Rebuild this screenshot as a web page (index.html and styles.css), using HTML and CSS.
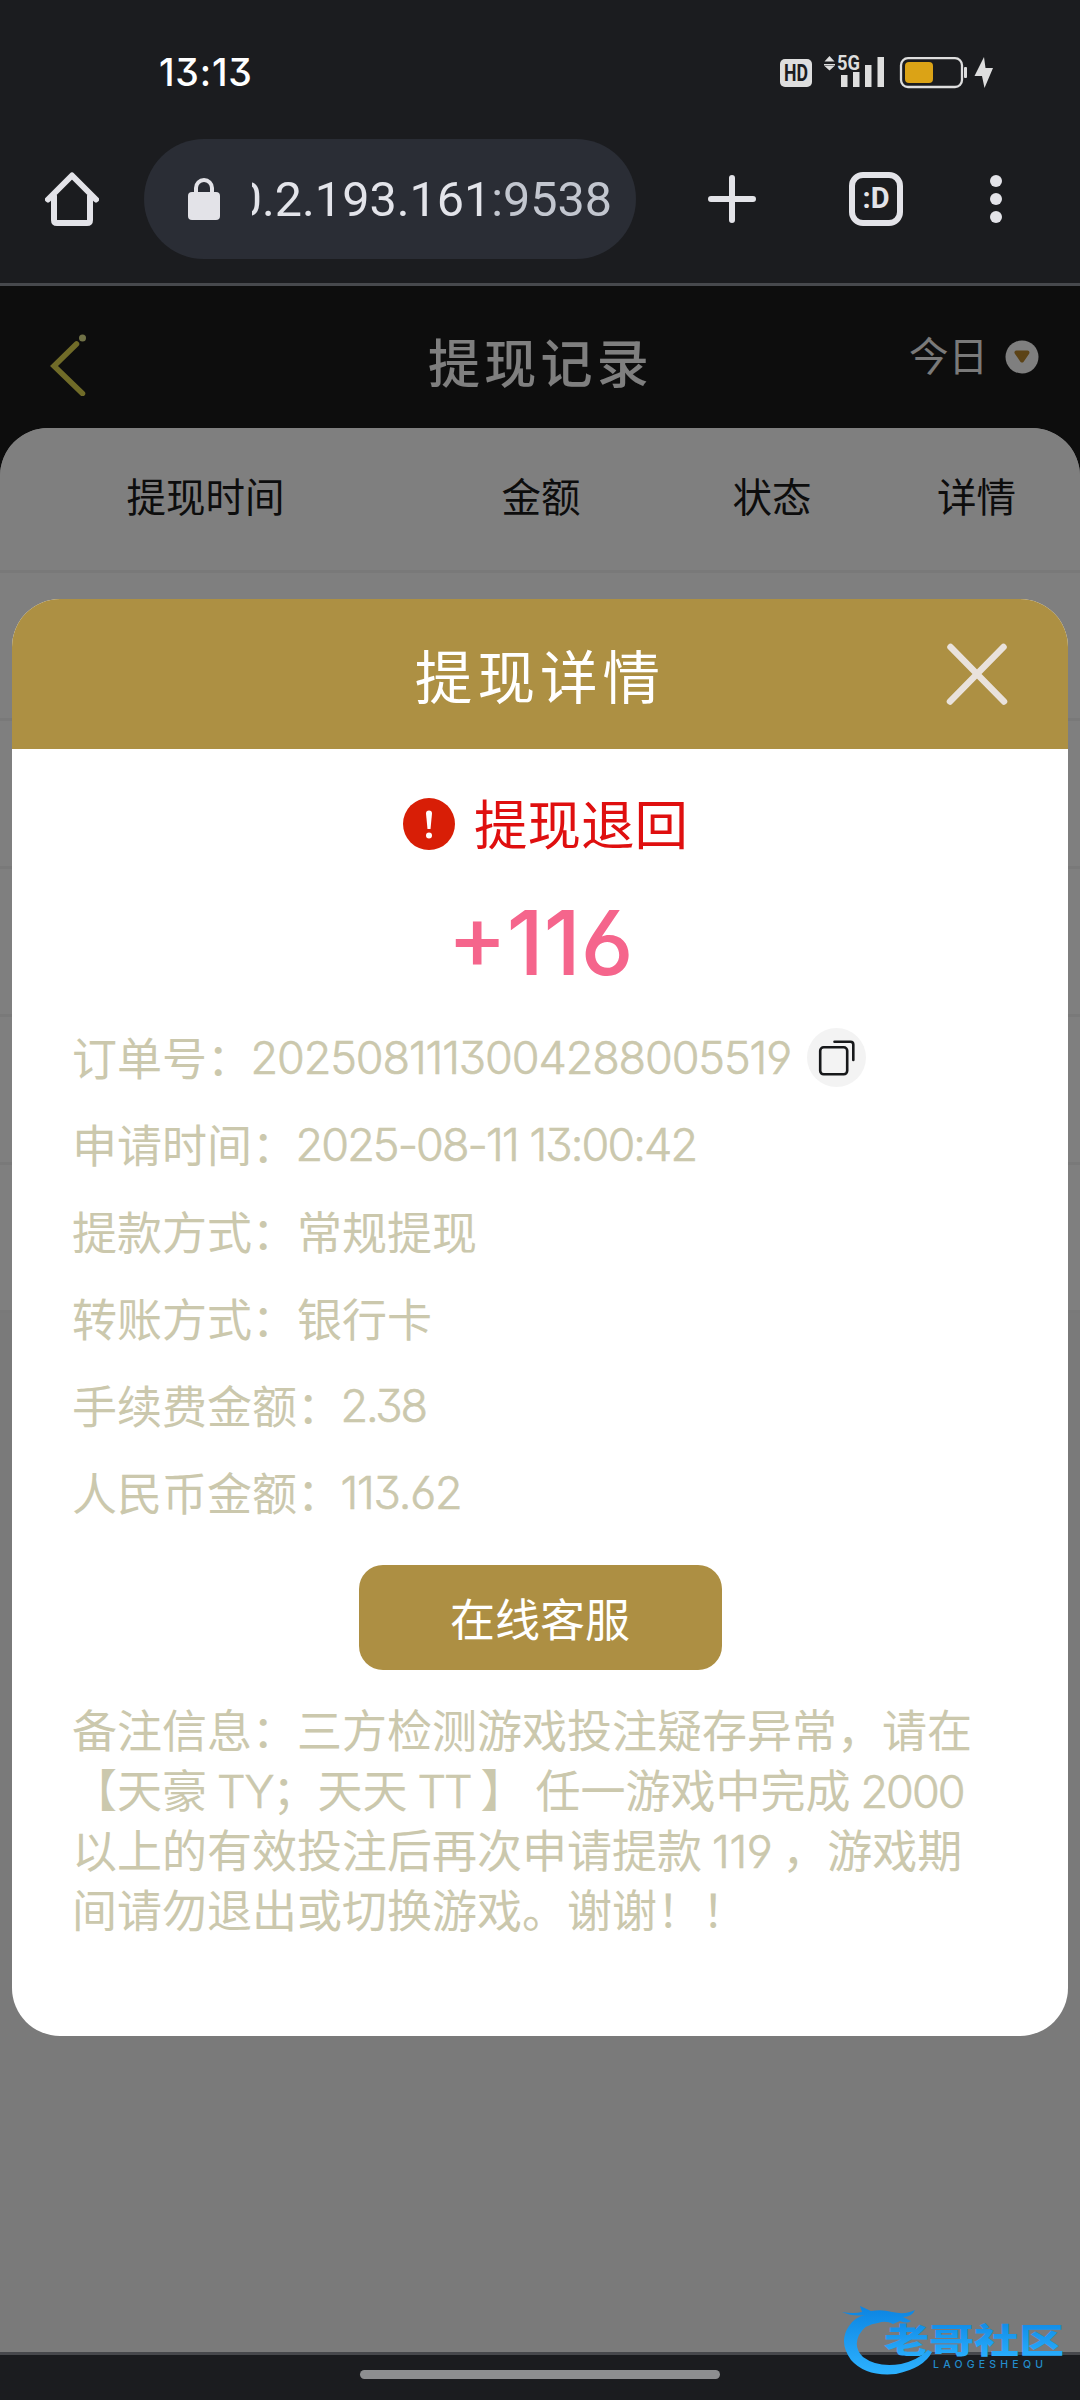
FILE: index.html
```html
<!DOCTYPE html>
<html lang="zh-CN">
<head>
<meta charset="utf-8">
<title>提现记录</title>
<link rel="stylesheet" href="styles.css">
</head>
<body>
<div class="statusbar">
  <span class="clock">13:13</span>
  <svg class="sysicons" width="220" height="40" viewBox="0 0 220 40">
    <rect x="5" y="7" width="32" height="28" rx="5" fill="#dedede"/>
    <text class="hd" x="9" y="29" textLength="24" lengthAdjust="spacingAndGlyphs">HD</text>
    <path d="M54.500 4l5 5.500h-10zM49 12h11v1.500H49zM54.500 18.500l5-4.500h-10z" fill="#dedede"/>
    <text class="fiveg" x="62" y="18" textLength="23" lengthAdjust="spacingAndGlyphs">5G</text>
    <path d="M66 23h6.500v12H66zM78 20h6.500v15H78zM90 13h6.500v22H90zM102.500 5h6.500v30h-6.500z" fill="#dedede"/>
    <rect x="126" y="6.200" width="61" height="28.800" rx="7" fill="none" stroke="#dedede" stroke-width="2.300"/>
    <rect x="130" y="10" width="28" height="21" rx="4" fill="#dba316"/>
    <rect x="189" y="15" width="3" height="11" rx="1" fill="#dedede"/>
    <path d="M209 5l-9.500 19h7.500l2.500 12 8.500-20h-7.500z" fill="#dedede"/>
  </svg>
</div>
<div class="toolbar">
  <svg class="home" width="54" height="54" viewBox="0 0 54 54">
    <path d="M3 27.500L27 3.500L51 27.500M9 24V48Q9 51 12 51H42Q45 51 45 48V24" fill="none" stroke="#e3e3e8" stroke-width="6" stroke-linecap="round" stroke-linejoin="round"/>
  </svg>
  <div class="address">
    <svg width="32" height="42" viewBox="0 0 32 42">
      <path d="M8 17V10a8 8 0 0 1 16 0V17" fill="none" stroke="#e3e3e8" stroke-width="4"/>
      <rect y="14" width="32" height="28" rx="4" fill="#e3e3e8"/>
    </svg>
    <div class="url"><span>0.2.193.161<span class="port">:9538</span></span></div>
  </div>
  <svg class="plus" width="48" height="48" viewBox="0 0 48 48">
    <path d="M24 3V45M3 24H45" stroke="#e3e3e8" stroke-width="6" stroke-linecap="round"/>
  </svg>
  <div class="tabs">:D</div>
  <svg class="menu" width="12" height="48" viewBox="0 0 12 48" fill="#e3e3e8">
    <circle cx="6" cy="6" r="6"/><circle cx="6" cy="24" r="6"/><circle cx="6" cy="42" r="6"/>
  </svg>
</div>
<main class="page">
  <header class="pagehead">
    <svg class="back" width="40" height="64" viewBox="0 0 40 64">
      <path d="M27.500 12L5 34L33.500 61.500" fill="none" stroke="#f2e656" stroke-opacity=".92" stroke-width="5.500" stroke-linecap="round" stroke-linejoin="miter"/>
      <circle cx="33.500" cy="6" r="3.500" fill="#e2e48e"/>
    </svg>
    <h1>提现记录</h1>
    <div class="range">今日
      <svg width="34" height="34" viewBox="0 0 34 34">
        <circle cx="17" cy="17" r="16.500" fill="#fff"/>
        <path d="M11.500 12.500h11L17 20.500z" fill="#b8862c" stroke="#b8862c" stroke-width="4" stroke-linejoin="round"/>
      </svg>
    </div>
  </header>
  <section class="list">
    <div class="cols"><span>提现时间</span><span>金额</span><span>状态</span><span>详情</span></div>
    <div class="row"></div><div class="row"></div><div class="row"></div><div class="row"></div><div class="row"></div>
  </section>
  <div class="mask">
    <section class="modal">
      <header class="modalhead">
        <h2>提现详情</h2>
        <svg class="close" width="62" height="62" viewBox="0 0 62 62">
          <path d="M4.500 4L58 58.500M57.500 4L4 58.500" stroke="#e9e2dc" stroke-width="6.500" stroke-linecap="round"/>
        </svg>
      </header>
      <div class="state">
        <svg width="52" height="52" viewBox="0 0 52 52">
          <circle cx="26" cy="26" r="26" fill="#d81e06"/>
          <path d="M23 15.500a3 3 0 0 1 6 0L27.500 31h-3z" fill="#fff"/><circle cx="26" cy="37.500" r="3" fill="#fff"/>
        </svg>
        <span>提现退回</span>
      </div>
      <div class="amount">+116</div>
      <ul class="info">
        <li>订单号：<span class="num order">2025081113004288005519</span>
          <svg class="copy" width="59" height="59" viewBox="0 0 59 59">
            <circle cx="29.500" cy="29.500" r="29.500" fill="#f3f3f3"/>
            <g fill="none" stroke="#17181a" stroke-width="2.600" stroke-linecap="round">
              <rect x="13.200" y="19.300" width="27" height="27" rx="3.500"/>
              <path d="M27.500 13.800H43.500Q46.300 13.800 46.300 16.600V32"/>
            </g>
          </svg>
        </li>
        <li>申请时间：<span class="num date">2025-08-11 13:00:42</span></li>
        <li>提款方式：常规提现</li>
        <li>转账方式：银行卡</li>
        <li>手续费金额：<span class="num fee">2.38</span></li>
        <li>人民币金额：<span class="num">113.62</span></li>
      </ul>
      <button class="service">在线客服</button>
      <p class="note"><span>备注信息：三方检测游戏投注疑存异常，请在</span><span>【天豪 <b>TY</b>；天天 <b>TT</b> 】 任一游戏中完成 <b>2000</b></span><span>以上的有效投注后再次申请提款 <b class="sum">119</b> ，游戏期</span><span>间请勿退出或切换游戏。谢谢！！</span></p>
    </section>
  </div>
</main>
<footer class="navbar"><i></i></footer>
<svg class="brand" width="230" height="76" viewBox="0 0 230 76">
  <defs><linearGradient id="blue" x1="0" y1="0" x2="0" y2="1"><stop offset="0" stop-color="#0b84e2"/><stop offset="1" stop-color="#2db2ff"/></linearGradient></defs>
  <path fill="url(#blue)" d="M2 10Q14 12 22 10L20 4L31 9Q42 7 52 10Q66 13 75 8Q72 15 63 15L71 19Q67 22 60 19L53 22Q46 18 38 21Q25 22 19 33Q13 45 23 55Q38 66 61 62Q78 58 88 48L92 50Q84 66 56 72Q26 75 11 58Q-2 40 9 24Q15 15 25 13Q13 15 2 10Z"/>
  <text class="brandname" x="44" y="50.500" textLength="180" lengthAdjust="spacingAndGlyphs" fill="url(#blue)">老哥社区</text>
  <text class="brandsub" x="93" y="65.500" textLength="110">LAOGESHEQU</text>
</svg>
</body>
</html>
```
FILE: styles.css
```css
* { box-sizing: border-box; }
body {
  margin: 0;
  width: 1080px;
  height: 2400px;
  display: flex;
  flex-direction: column;
  position: relative;
  overflow: hidden;
  background: #1b1c1f;
  font-family: Inter, "Noto Sans CJK SC", sans-serif;
  font-feature-settings: "cv03", "cv04", "cv09";
}
svg { display: block; flex: none; }
h1, h2, p, ul { margin: 0; padding: 0; list-style: none; }

.statusbar {
  height: 139px;
  padding: 52px 85px 0 159px;
  display: flex;
  justify-content: space-between;
  align-items: flex-start;
}
.clock { color: #fff; font-size: 37.500px; line-height: 42px; font-weight: 500; letter-spacing: .8px; }
.hd { font: 700 24px Roboto, sans-serif; fill: #1b1c1f; }
.fiveg { font: 700 21px Roboto, sans-serif; fill: #dedede; }

.toolbar {
  height: 147px;
  padding: 0 78px 24px 45px;
  display: flex;
  align-items: center;
  border-bottom: 3px solid #47494d;
}
.address {
  width: 492px;
  height: 120px;
  margin: 0 72px 0 45px;
  padding: 0 24px 0 44px;
  border-radius: 60px;
  background: #2a2d35;
  display: flex;
  align-items: center;
  gap: 32px;
}
.url {
  flex: 1;
  padding-top: 2px;
  display: flex;
  justify-content: flex-end;
  overflow: hidden;
  white-space: nowrap;
  color: #e3e4ea;
  font: 48.500px/60px Roboto, sans-serif;
}
.port { color: #c2c6cf; }
.tabs {
  width: 54px;
  height: 54px;
  margin: 0 87px 0 93px;
  border: 6px solid #e3e3e8;
  border-radius: 14px;
  color: #e3e3e8;
  font: 700 29px/40px Roboto, sans-serif;
  text-align: center;
}

.page { height: 2066px; position: relative; background: #1b1b1b; display: flex; flex-direction: column; }
.pagehead {
  height: 142px;
  padding: 0 41px 0 49px;
  display: grid;
  grid-template-columns: 1fr auto 1fr;
  align-items: center;
  color: #fff;
}
.back { margin-top: 13px; }
.pagehead h1 { font-size: 52px; font-weight: 500; letter-spacing: 4.200px; line-height: 60px; margin: 16px 7px 0 0; }
.range { display: flex; align-items: center; justify-content: flex-end; gap: 17px; font-size: 39.500px; line-height: 44px; color: #f5f5f5; }
.list { flex: 1; background: #f5f5f5; border-radius: 48px 48px 0 0; overflow: hidden; }
.cols, .row { background: #fff; border-bottom: 3px solid #f2f2f2; }
.cols {
  height: 145px;
  padding-bottom: 10px;
  display: grid;
  grid-template-columns: 411px 260px 202px 207px;
  align-items: center;
  text-align: center;
  font-size: 39.500px;
  color: #1a1a1a;
}
.row { height: 148px; }

.mask { position: absolute; inset: 0; padding: 313px 12px 0; background: rgba(0, 0, 0, .5); }
.modal { height: 1437px; border-radius: 48px; background: #fff; overflow: hidden; }
.modalhead {
  height: 150px;
  padding: 0 60px 0 122px;
  display: flex;
  align-items: center;
  background: #ad9043;
  color: #fff;
}
.modalhead h2 { flex: 1; padding: 8px 0 0 0; text-align: center; font-size: 57.600px; font-weight: 400; letter-spacing: 5px; line-height: 70px; }
.state { height: 100px; padding: 49px 0 0 11px; display: flex; justify-content: center; align-items: center; gap: 19px; font-size: 53.500px; line-height: 54px; color: #df0f0f; }
.state span { padding-top: 5px; }
.amount { height: 140px; padding-left: 1px; text-align: center; font-size: 89px; line-height: 187px; font-weight: 500; letter-spacing: 0; color: #f5658c; }
.info { padding: 24px 60px 0; font-size: 45px; color: #cbc8ad; }
.info li { height: 87px; display: flex; align-items: center; white-space: nowrap; }
.num { margin-left: -1.500px; padding-top: 1px; font-weight: 300; letter-spacing: -1.200px; -webkit-text-stroke: .6px currentColor; }
.order { letter-spacing: -1.100px; }
.date { letter-spacing: -1.900px; word-spacing: 1px; }
.fee { letter-spacing: -2.200px; }
.copy { margin: 2px 0 0 16px; }
.service {
  display: block;
  width: 363px;
  height: 105px;
  margin: 30px auto 0;
  border: 0;
  border-radius: 24px;
  background: #ad8f43;
  color: #fff;
  font: inherit;
  font-size: 45px;
}
.note { padding: 32px 60px 0; font-size: 45px; line-height: 60px; word-spacing: -2.700px; color: #cbc8ad; }
.note span { display: block; white-space: nowrap; }
.note b { font-weight: 300; letter-spacing: -2px; -webkit-text-stroke: .6px currentColor; }
.note .sum { letter-spacing: -.3px; }

.navbar { height: 48px; padding-bottom: 6px; border-top: 3px solid #47484c; display: flex; align-items: center; justify-content: center; }
.navbar i { width: 360px; height: 9px; border-radius: 5px; background: #8d8e90; }

.brand { position: absolute; left: 840px; top: 2302px; }
.brandname { font: 900 34px "Noto Sans CJK SC", sans-serif; }
.brandsub { font: 500 10.500px Inter, sans-serif; fill: #238dcc; }
```
